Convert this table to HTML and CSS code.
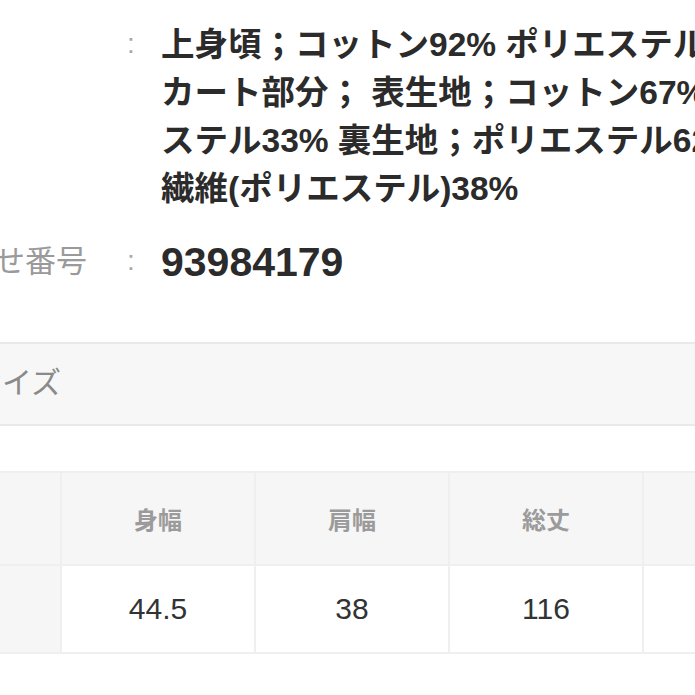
FILE: index.html
```html
<!DOCTYPE html>
<html lang="ja">
<head>
<meta charset="utf-8">
<link rel="stylesheet" href="styles.css">
</head>
<body>
<div class="page">
  <dl class="spec">
    <div class="spec-row">
      <dt class="spec-label">素材</dt>
      <dd class="spec-colon">:</dd>
      <dd class="spec-value">上身頃；コットン92% ポリエステル8% ス<br>カート部分； 表生地；コットン67% ポリエ<br>ステル33% 裏生地；ポリエステル62% 再生<br>繊維(ポリエステル)38%</dd>
    </div>
    <div class="spec-row">
      <dt class="spec-label">問い合わせ番号</dt>
      <dd class="spec-colon">:</dd>
      <dd class="spec-value spec-number">93984179</dd>
    </div>
  </dl>

  <h2 class="band">サイズ</h2>

  <table class="size-table">
    <colgroup>
      <col class="col-head">
      <col class="col-data">
      <col class="col-data">
      <col class="col-data">
      <col class="col-data">
    </colgroup>
    <thead>
      <tr>
        <th class="corner"></th>
        <th>身幅</th>
        <th>肩幅</th>
        <th>総丈</th>
        <th>袖丈</th>
      </tr>
    </thead>
    <tbody>
      <tr>
        <th class="row-head"></th>
        <td>44.5</td>
        <td>38</td>
        <td>116</td>
        <td>&nbsp;</td>
      </tr>
    </tbody>
  </table>
</div>
</body>
</html>
```

FILE: styles.css
```css
html, body {
  margin: 0;
  padding: 0;
  background: #ffffff;
}
body {
  width: 695px;
  height: 695px;
  overflow: hidden;
  font-family: "Liberation Sans", "Noto Sans CJK JP", sans-serif;
  color: #333333;
}
.page {
  padding-top: 21px;
}
.spec {
  margin: 0 0 0 -130px;
}
.spec-row {
  display: grid;
  grid-template-columns: 230px 61px 1fr;
  margin-bottom: 25px;
}
.spec-row:last-child {
  margin-bottom: 0;
}
.spec-label {
  font-size: 31px;
  line-height: 48px;
  color: #9a9a9a;
  white-space: nowrap;
  overflow: hidden;
}
.spec-colon {
  margin: 0;
  padding-left: 27px;
  font-size: 28px;
  line-height: 46px;
  color: #a8a8a8;
}
.spec-value {
  margin: 0;
  font-size: 33.5px;
  line-height: 48px;
  font-weight: 600;
  color: #2b2b2b;
  white-space: nowrap;
}
.spec-number {
  font-size: 41px;
}
.band {
  margin: 56px 0 0;
  height: 80px;
  border-top: 2px solid #e9e9e9;
  border-bottom: 2px solid #e9e9e9;
  background: #f7f7f7;
  font-size: 30px;
  font-weight: 400;
  line-height: 78px;
  color: #8a8a8a;
  text-indent: -28px;
  white-space: nowrap;
}
.size-table {
  width: 936px;
  margin: 45px 0 0 -100px;
  border-collapse: collapse;
  table-layout: fixed;
}
.col-head {
  width: 160px;
}
.col-data {
  width: 194px;
}
.size-table th,
.size-table td {
  border: 2px solid #efefef;
  text-align: center;
  padding: 0;
}
.size-table thead th {
  height: 91px;
  background: #f6f6f6;
  font-size: 24px;
  font-weight: 700;
  color: #9b9b9b;
}
.size-table .corner,
.size-table .row-head {
  background: #f6f6f6;
}
.size-table td {
  height: 86px;
  background: #ffffff;
  font-size: 30px;
  color: #333333;
}
```
